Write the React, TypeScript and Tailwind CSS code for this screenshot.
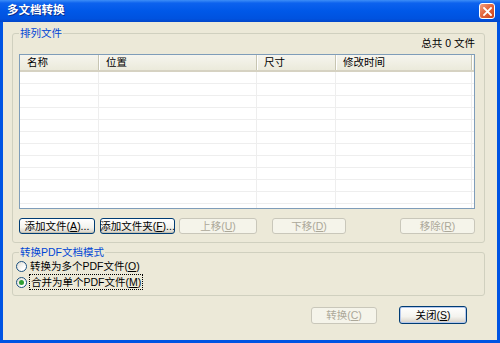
import React from "react";

const FONT = "font-['Tahoma','Liberation_Sans','Noto_Sans_CJK_SC',sans-serif]";

type BtnProps = {
  label: React.ReactNode;
  w: string;
  h?: string;
  disabled?: boolean;
  isDefault?: boolean;
  className?: string;
};

// XP-style push button
const XpButton: React.FC<BtnProps> = ({ label, w, h = "h-[16px]", disabled, isDefault, className = "" }) => {
  if (disabled) {
    return (
      <div
        className={`${w} ${h} ${className} flex items-center justify-center whitespace-nowrap rounded-[3px] border border-[#C9C7BA] bg-[#F5F4EA] text-[#ACA899] leading-none`}
      >
        {label}
      </div>
    );
  }
  return (
    <div
      className={`${w} ${h} ${className} flex items-center justify-center whitespace-nowrap rounded-[3px] border border-[#003C74] bg-[linear-gradient(to_bottom,#FFFFFF_0%,#F4F3EE_60%,#D6D0C5_100%)] text-black leading-none ${
        isDefault ? "shadow-[inset_0_0_0_1px_#B5C8EC]" : "shadow-[inset_0_-1px_0_#C5C2B2]"
      }`}
    >
      {label}
    </div>
  );
};

const U: React.FC<{ c: string }> = ({ c }) => <span className="underline underline-offset-1">{c}</span>;

const Radio: React.FC<{ checked?: boolean }> = ({ checked }) => (
  <div className="w-[11px] h-[11px] rounded-full border border-[#1C5180] bg-[linear-gradient(135deg,#DCDBD2_0%,#FFFFFF_70%)] flex items-center justify-center">
    {checked && <div className="w-[5px] h-[5px] rounded-full bg-[#2E9E33]" />}
  </div>
);

const columns = [
  { name: "名称", w: "w-[79px]" },
  { name: "位置", w: "w-[158px]" },
  { name: "尺寸", w: "w-[79px]" },
  { name: "修改时间", w: "w-[136px]" },
];

export default function App() {
  const rows = Array.from({ length: 12 });
  return (
    <div className={`w-[500px] h-[343px] flex flex-col bg-[#0054E3] ${FONT} select-none`}>
      {/* Title bar */}
      <div className="h-[22px] flex items-center pl-[7px] pr-[5px] bg-[linear-gradient(to_bottom,#3D8EF7_0%,#0D62EE_14%,#0058E8_50%,#0052DF_85%,#0346C9_100%)]">
        <span className="text-white font-bold text-[11.5px] leading-none [text-shadow:1px_1px_0_#0A2E8C]">多文档转换</span>
        <div className="ml-auto w-[16px] h-[16px] rounded-[3px] border border-white bg-[linear-gradient(135deg,#F3A184_0%,#E4683F_45%,#C9401B_100%)] flex items-center justify-center">
          <svg width="9" height="9" viewBox="0 0 9 9">
            <path d="M1 1L8 8M8 1L1 8" stroke="white" strokeWidth="1.8" strokeLinecap="square" />
          </svg>
        </div>
      </div>

      {/* Client area */}
      <div className="flex-1 mx-[3px] mb-[3px] bg-[#ECE9D8] flex flex-col pl-[9px] pr-[12px] pt-[11px] text-[10.5px] text-black whitespace-nowrap">
        {/* Group 1 */}
        <div className="relative h-[210px] border border-[#D0D0BF] rounded-[3px] pl-[6px] pr-[9px] pt-[3px] flex flex-col">
          <span className="absolute left-[6px] -top-[7px] px-[1px] bg-[#ECE9D8] text-[#0046D5] leading-[12px]">排列文件</span>
          <div className="h-[12px] leading-[12px] text-right">总共 0 文件</div>
          <div className="mt-[5px] h-[155px] border border-[#7F9DB9] bg-white flex flex-col overflow-hidden">
            <div className="h-[17px] flex shrink-0 bg-[linear-gradient(to_bottom,#F6F5EE_0%,#EBEADB_100%)] border-b-2 border-[#D6D2C2]">
              {columns.map((c) => (
                <div key={c.name} className={`${c.w} h-full flex items-center pl-[7px] border-r border-[#C7C5B2] shadow-[1px_0_0_#FFFFFF]`}>
                  {c.name}
                </div>
              ))}
              <div className="flex-1" />
            </div>
            {rows.map((_, i) => (
              <div key={i} className="h-[12px] flex border-b border-[#EEEEEE] shrink-0">
                {columns.map((c) => (
                  <div key={c.name} className={`${c.w} h-full border-r border-[#EEEEEE]`} />
                ))}
              </div>
            ))}
          </div>
          <div className="mt-[9px] flex items-center">
            <XpButton w="w-[76px]" label={<>添加文件(<U c="A" />)...</>} />
            <XpButton w="w-[75px]" className="ml-[5px]" label={<>添加文件夹(<U c="F" />)...</>} />
            <XpButton w="w-[78px]" className="ml-[4px]" disabled label={<>上移(<U c="U" />)</>} />
            <XpButton w="w-[74px]" className="ml-[15px]" disabled label={<>下移(<U c="D" />)</>} />
            <XpButton w="w-[75px]" className="ml-auto" disabled label={<>移除(<U c="R" />)</>} />
          </div>
        </div>

        {/* Group 2 */}
        <div className="relative mt-[9px] h-[44px] border border-[#D0D0BF] rounded-[3px] pl-[3px] pt-[5px] flex flex-col">
          <span className="absolute left-[6px] -top-[7px] px-[1px] bg-[#ECE9D8] text-[#0046D5] leading-[12px]">转换PDF文档模式</span>
          <div className="h-[16px] flex items-center">
            <Radio />
            <span className="ml-[3px] leading-[12px]">转换为多个PDF文件(<U c="O" />)</span>
          </div>
          <div className="h-[16px] flex items-center">
            <Radio checked />
            <span className="ml-[2px] px-[1px] border border-dotted border-black leading-[12px] h-[16px] flex items-center">
              合并为单个PDF文件(<U c="M" />)
            </span>
          </div>
        </div>

        {/* Dialog buttons */}
        <div className="mt-[10px] mr-[18px] flex justify-end items-start">
          <XpButton w="w-[66px]" h="h-[17px]" className="mt-[1px]" disabled label={<>转换(<U c="C" />)</>} />
          <XpButton w="w-[68px]" h="h-[18px]" className="ml-[22px]" isDefault label={<>关闭(<U c="S" />)</>} />
        </div>
      </div>
    </div>
  );
}
